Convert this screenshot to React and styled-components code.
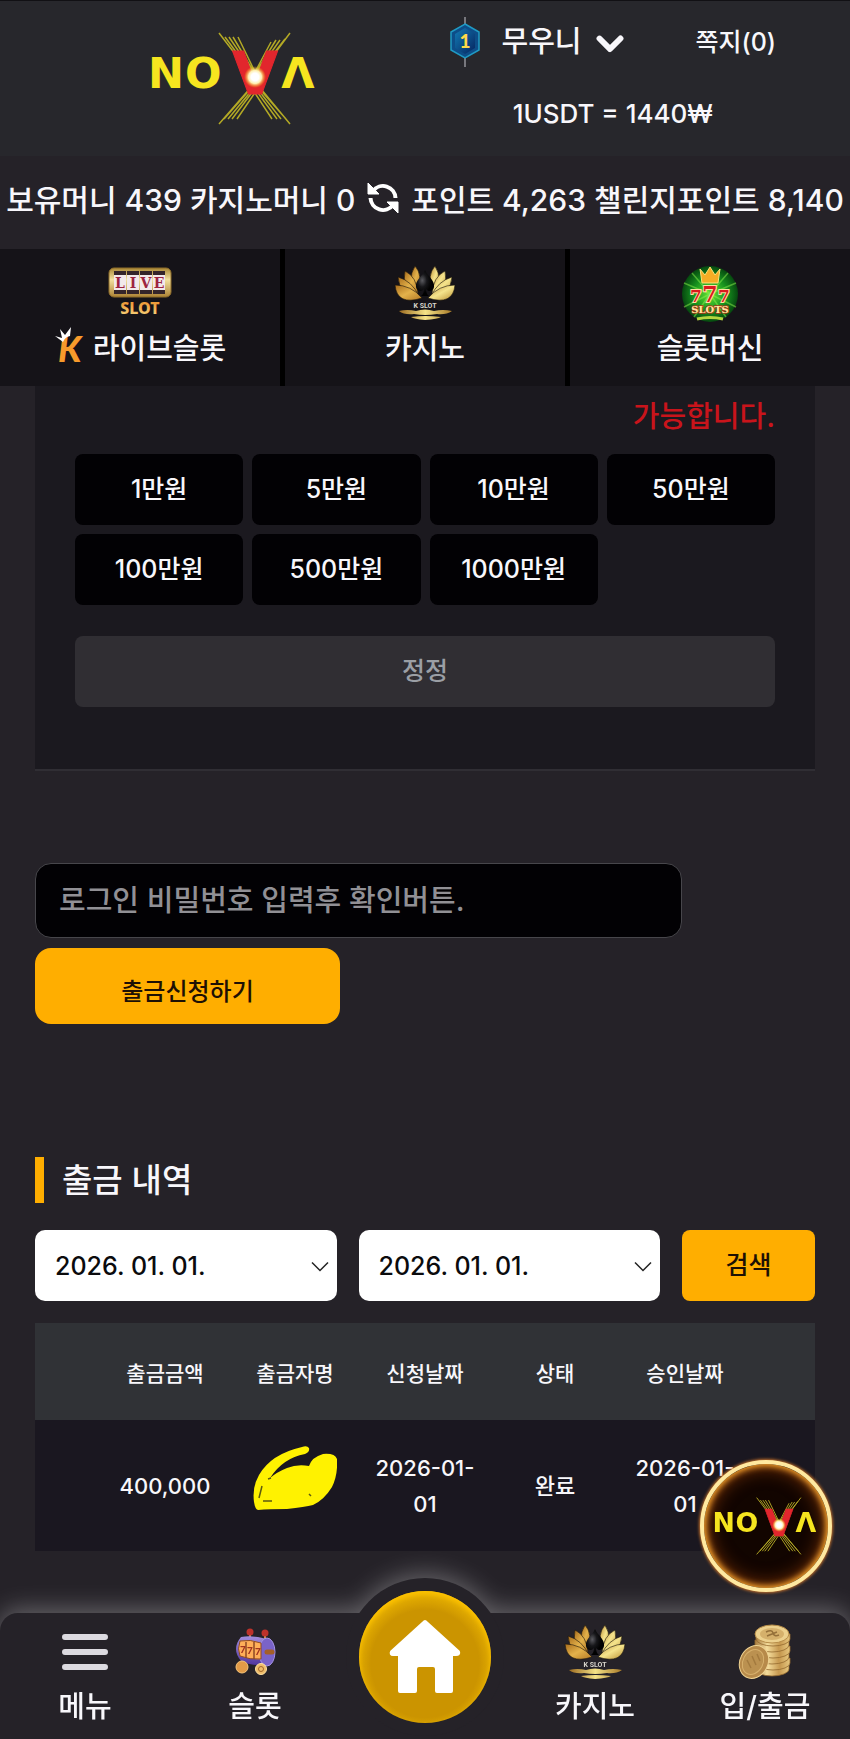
import React, { useState } from "react";
import styled, { createGlobalStyle } from "styled-components";
import { FaChevronDown } from "react-icons/fa6";

const palette = {
  page: "#252228",
  header: "#27272c",
  tab: "#151318",
  panel: "#1b191f",
  row: "#1a1720",
  tableHead: "#303236",
  disabled: "#302e33",
  line: "#302e34",
  amber: "#ffae00",
  text: "#f8f7fb",
  red: "#c9141b",
};

const amounts = ["1만원", "5만원", "10만원", "50만원", "100만원", "500만원", "1000만원"];
const columns = ["출금금액", "출금자명", "신청날짜", "상태", "승인날짜"];
const dates = ["2026. 01. 01.", "2025. 12. 31.", "2025. 12. 30."];

const App = () => {
  const [password, setPassword] = useState("");

  return (
    <>
      <GlobalStyle />
      <Gradients />
      <Header>
        <LogoLink href="#home" aria-label="NOVA">
          <NovaLogo width={170} />
        </LogoLink>
        <UserArea>
          <UserRow>
            <NameButton type="button">
              <LevelBadge />
              <span>무우니</span>
              <FaChevronDown size={28} stroke="currentColor" strokeWidth={44} />
            </NameButton>
            <NoteLink href="#notes">쪽지(0)</NoteLink>
          </UserRow>
          <Rate>1USDT = 1440₩</Rate>
        </UserArea>
      </Header>
      <Balance>
        <span>보유머니 439 카지노머니 0</span>
        <RefreshButton type="button" aria-label="새로고침">
          <RefreshIcon />
        </RefreshButton>
        <span>포인트 4,263 챌린지포인트 8,140</span>
      </Balance>
      <GameTabs>
        <GameTab href="#live">
          <LiveSlotIcon />
          <TabLabel>
            <KMark />
            라이브슬롯
          </TabLabel>
        </GameTab>
        <GameTab href="#casino">
          <LotusIcon />
          <TabLabel>카지노</TabLabel>
        </GameTab>
        <GameTab href="#slots">
          <SevensIcon />
          <TabLabel>슬롯머신</TabLabel>
        </GameTab>
      </GameTabs>

      <Main>
        <AmountPanel>
          <Warning>가능합니다.</Warning>
          <AmountGrid>
            {amounts.map((amount) => (
              <AmountButton type="button" key={amount}>
                {amount}
              </AmountButton>
            ))}
          </AmountGrid>
          <ResetButton type="button">정정</ResetButton>
        </AmountPanel>

        <WithdrawForm onSubmit={(e) => e.preventDefault()}>
          <PasswordInput
            type="password"
            aria-label="로그인 비밀번호"
            placeholder="로그인 비밀번호 입력후 확인버튼."
            value={password}
            onChange={(e) => setPassword(e.target.value)}
          />
          <SubmitButton type="submit">출금신청하기</SubmitButton>
        </WithdrawForm>

        <Title>출금 내역</Title>
        <SearchRow>
          <DateField label="시작일" />
          <DateField label="종료일" />
          <SearchButton type="button">검색</SearchButton>
        </SearchRow>

        <Table>
          <colgroup>
            <EdgeCol />
            {columns.map((name) => (
              <col key={name} />
            ))}
            <EdgeCol />
          </colgroup>
          <thead>
            <tr>
              <HeadCell as="td" />
              {columns.map((name) => (
                <HeadCell key={name} scope="col">
                  {name}
                </HeadCell>
              ))}
              <HeadCell as="td" />
            </tr>
          </thead>
          <tbody>
            <tr>
              <Cell />
              <Cell>400,000</Cell>
              <Cell>
                <Scribble />
              </Cell>
              <Cell>2026-01-01</Cell>
              <Cell>완료</Cell>
              <Cell>2026-01-01</Cell>
              <Cell />
            </tr>
          </tbody>
        </Table>
      </Main>

      <FloatingLink href="#nova" aria-label="NOVA">
        <NovaLogo width={106} />
      </FloatingLink>

      <BottomNav>
        <NavItem href="#menu">
          <IconSlot>
            <MenuIcon />
          </IconSlot>
          메뉴
        </NavItem>
        <NavItem href="#slot">
          <IconSlot>
            <SlotMachineIcon />
          </IconSlot>
          슬롯
        </NavItem>
        <HomeItem>
          <HomeLink href="#home" aria-label="홈">
            <HouseIcon />
          </HomeLink>
        </HomeItem>
        <NavItem href="#casino">
          <IconSlot>
            <LotusIcon />
          </IconSlot>
          카지노
        </NavItem>
        <NavItem href="#cash">
          <IconSlot>
            <CoinsIcon />
          </IconSlot>
          입/출금
        </NavItem>
      </BottomNav>
    </>
  );
};

export default App;

const DateField = ({ label }) => (
  <DateWrap>
    <DateSelect aria-label={label}>
      {dates.map((date) => (
        <option key={date}>{date}</option>
      ))}
    </DateSelect>
    <DateArrow viewBox="0 0 18 11" aria-hidden="true">
      <path d="M1 1.5 L9 9.5 L17 1.5" fill="none" stroke="#222" strokeWidth="1.5" />
    </DateArrow>
  </DateWrap>
);

const Gradients = () => (
  <HiddenSvg width="0" height="0" aria-hidden="true">
    <defs>
      <linearGradient id="gold" x1="0" y1="0" x2="1" y2="1">
        <stop offset="0" stopColor="#a96d1c" />
        <stop offset="0.5" stopColor="#e3b24b" />
        <stop offset="1" stopColor="#b57a25" />
      </linearGradient>
      <linearGradient id="paleGold" x1="0" y1="0" x2="1" y2="1">
        <stop offset="0" stopColor="#b98a33" />
        <stop offset="0.5" stopColor="#f5e48c" />
        <stop offset="1" stopColor="#b88d30" />
      </linearGradient>
      <linearGradient id="water" x1="0" y1="0" x2="1" y2="0">
        <stop offset="0" stopColor="#9c6b20" />
        <stop offset="0.5" stopColor="#f4e287" />
        <stop offset="1" stopColor="#a87a28" />
      </linearGradient>
      <linearGradient id="frame" x1="0" y1="0" x2="0" y2="1">
        <stop offset="0" stopColor="#a88633" />
        <stop offset="0.4" stopColor="#f3e2a0" />
        <stop offset="1" stopColor="#ad8334" />
      </linearGradient>
      <linearGradient id="slotText" x1="0" y1="0" x2="0" y2="1">
        <stop offset="0.3" stopColor="#ee9c3b" />
        <stop offset="1" stopColor="#f7e08b" />
      </linearGradient>
      <linearGradient id="badge" x1="0" y1="0" x2="1" y2="1">
        <stop offset="0" stopColor="#127bb5" />
        <stop offset="1" stopColor="#06245f" />
      </linearGradient>
      <linearGradient id="violet" x1="0" y1="0" x2="0" y2="1">
        <stop offset="0" stopColor="#a18ddd" />
        <stop offset="1" stopColor="#51379f" />
      </linearGradient>
      <linearGradient id="coinSide" x1="0" y1="0" x2="1" y2="0">
        <stop offset="0" stopColor="#a87c40" />
        <stop offset="0.35" stopColor="#f4dc9b" />
        <stop offset="0.7" stopColor="#c6984f" />
        <stop offset="1" stopColor="#e6c77f" />
      </linearGradient>
      <radialGradient id="green">
        <stop offset="0" stopColor="#66e635" />
        <stop offset="0.6" stopColor="#16911e" />
        <stop offset="1" stopColor="#06480f" />
      </radialGradient>
      <radialGradient id="core">
        <stop offset="0.35" stopColor="#ffffff" />
        <stop offset="0.6" stopColor="#fff0b2" />
        <stop offset="1" stopColor="#ffb000" stopOpacity="0" />
      </radialGradient>
      <radialGradient id="spade" cx="0.35" cy="0.4">
        <stop offset="0" stopColor="#5b5b60" />
        <stop offset="0.5" stopColor="#17171a" />
        <stop offset="1" stopColor="#010101" />
      </radialGradient>
    </defs>
  </HiddenSvg>
);

const NovaLogo = ({ width }) => (
  <svg width={width} viewBox="0 0 170 93" aria-hidden="true">
    <g stroke="#b3a925" strokeWidth="1.5">
      <path d="M70 92 L110 46 M75 87 L111 46 M79 87 L113 46 M83 87 L114 46 M88 87 L116 46" />
      <path d="M141 92 L103 46 M137 87 L101 46 M132 87 L100 46 M128 87 L98 46 M123 87 L96 46" />
      <path d="M70 1 L103 44 M76 5 L104 43 M80 5 L105 42 M84 5 L106 42 M89 5 L107 42" />
      <path d="M141 1 L109 44 M136 7 L108 43 M131 8 L107 42 M127 8 L106 42 M122 10 L105 42" />
    </g>
    <g fill="#f6e51f" fontFamily="DejaVu Sans" fontWeight="700" fontSize="43">
      <text x="-1" y="56">N</text>
      <text x="36" y="56">O</text>
      <text x="149" y="56" textAnchor="middle">Λ</text>
    </g>
    <text
      x="106"
      y="62"
      textAnchor="middle"
      fill="#e2262d"
      stroke="#e2262d"
      strokeWidth="1"
      fontFamily="DejaVu Sans"
      fontWeight="700"
      fontSize="59"
    >
      V
    </text>
    <circle cx="106" cy="45" r="11" fill="url(#core)" />
  </svg>
);

const LevelBadge = () => (
  <svg width="30" height="50" viewBox="0 0 30 50" aria-hidden="true">
    <path d="M15 0 V50" stroke="#77777d" strokeWidth="2" />
    <path d="M15 7 L29 15 V33 L15 41 L1 33 V15 Z" fill="#0d4d88" stroke="#1f9ac4" strokeWidth="1.5" />
    <path d="M15 11 L25 17 V31 L15 37 L5 31 V17 Z" fill="url(#badge)" />
    <text x="15" y="31" textAnchor="middle" fontFamily="Lato" fontWeight="900" fontSize="19" fill="#ffd94a">
      1
    </text>
  </svg>
);

const RefreshIcon = () => (
  <svg width="32" height="32" viewBox="0 0 32 32" fill="#fff" aria-hidden="true">
    <path d="M6 9 A12.5 12.5 0 0 1 28.5 16" fill="none" stroke="#fff" strokeWidth="4" />
    <path d="M26 23 A12.5 12.5 0 0 1 3.5 16" fill="none" stroke="#fff" strokeWidth="4" />
    <path d="M1 1 V12 H12 Z M31 31 V20 H20 Z" strokeLinejoin="round" stroke="#fff" />
  </svg>
);

const LiveSlotIcon = () => (
  <svg width="64" height="54" viewBox="0 0 64 54" aria-hidden="true">
    <rect x="1" y="3" width="62" height="29" rx="5" fill="url(#frame)" stroke="#8d6c2b" />
    {["L", "I", "V", "E"].map((letter, i) => (
      <g key={letter}>
        <rect x={6 + i * 13} y="6" width="12" height="23" fill="#34252a" />
        <rect x={6 + i * 13} y="10" width="12" height="15" fill="#f2e9ea" />
        <text
          x={12 + i * 13}
          y="23"
          textAnchor="middle"
          fontFamily="DejaVu Serif"
          fontWeight="700"
          fontSize="14"
          fill="#9d2440"
        >
          {letter}
        </text>
      </g>
    ))}
    <text
      x="32"
      y="49"
      textAnchor="middle"
      fontFamily="Noto Sans"
      fontWeight="800"
      fontSize="16"
      fill="url(#slotText)"
    >
      SLOT
    </text>
  </svg>
);

const KMark = () => (
  <svg width="36" height="46" viewBox="0 0 36 46" aria-hidden="true">
    <text x="4" y="36" fontFamily="Lato" fontWeight="900" fontStyle="italic" fontSize="36" fill="#f79a2b">
      K
    </text>
    <path d="M1 10 L8 12 L6 3 L11 9 L17 1 L16 10 Q11 11 9 16 Z" fill="#fff" />
  </svg>
);

const LotusIcon = () => (
  <svg width="62" height="56" viewBox="0 0 62 56" aria-hidden="true">
    <g fill="url(#gold)" stroke="#17120a" strokeWidth="0.6">
      <path d="M21 1 Q29 10 24 25 Q12 16 21 1 Z" />
      <path d="M11 6 Q23 12 24 29 Q7 22 11 6 Z" />
      <path d="M4 12 Q18 16 25 31 Q5 29 4 12 Z" />
      <path d="M1 20 Q17 20 28 33 Q3 41 1 20 Z" />
    </g>
    <g fill="url(#paleGold)" stroke="#17120a" strokeWidth="0.6">
      <path d="M41 1 Q33 10 38 25 Q50 16 41 1 Z" />
      <path d="M51 6 Q39 12 38 29 Q55 22 51 6 Z" />
      <path d="M58 12 Q44 16 37 31 Q57 29 58 12 Z" />
      <path d="M61 20 Q45 20 34 33 Q59 41 61 20 Z" />
    </g>
    <path
      d="M31 5 C34 12 41 15 40 22 C39 27 34 27 32 24 Q32 29 35 31 H27 Q30 29 30 24 C28 27 23 27 22 22 C21 15 28 12 31 5 Z"
      fill="url(#spade)"
    />
    <text x="31" y="43" textAnchor="middle" fontFamily="Roboto" fontWeight="700" fontSize="7" fill="#d8d5cc">
      K SLOT
    </text>
    <path
      d="M5 46 Q13 44 22 46 Q31 43 40 46 Q49 44 58 46 Q52 50 43 49 Q31 51 20 49 Q10 50 5 46 Z M17 52 Q31 50 47 52 Q44 54 31 55 Q20 54 17 52 Z"
      fill="url(#water)"
    />
  </svg>
);

const SevensIcon = () => (
  <svg width="56" height="58" viewBox="0 0 56 58" aria-hidden="true">
    <circle cx="28" cy="29" r="28" fill="url(#green)" />
    <path
      d="M28 29 L2 18 M28 29 L10 8 M28 29 L46 8 M28 29 L54 18 M28 29 L2 42 M28 29 L54 42 M28 29 L12 52 M28 29 L44 52"
      stroke="#8cf04c"
      strokeOpacity="0.5"
      strokeWidth="1.5"
    />
    <path d="M18 4 L23 10 L28 2 L33 10 L38 4 L36 18 H20 Z" fill="#f7ad25" stroke="#fce27a" />
    <g
      fontFamily="DejaVu Serif"
      fontWeight="700"
      textAnchor="middle"
      fill="#d91b1e"
      stroke="#ffe0a2"
      strokeWidth="2"
      paintOrder="stroke"
    >
      <text x="14" y="37" fontSize="17">7</text>
      <text x="42" y="37" fontSize="17">7</text>
      <text x="28" y="37" fontSize="22">7</text>
    </g>
    <text
      x="28"
      y="48"
      textAnchor="middle"
      fontFamily="DejaVu Serif"
      fontWeight="700"
      fontSize="10"
      fill="#ffe9a0"
      stroke="#a4381a"
      strokeWidth="1.5"
      paintOrder="stroke"
    >
      SLOTS
    </text>
    <path d="M15 54 Q28 51 41 54" stroke="#b4d63f" strokeWidth="3" fill="none" />
  </svg>
);

const SlotMachineIcon = () => (
  <svg width="44" height="48" viewBox="0 0 44 48" aria-hidden="true">
    <path d="M17 4 V13 M32 5 V14" stroke="#c98b54" strokeWidth="2" />
    <circle cx="17" cy="4" r="3.5" fill="#bd322b" />
    <circle cx="32" cy="5" r="3.5" fill="#bd322b" />
    <path d="M8 9 Q20 7 34 11 V36 Q20 39 8 33 Q-2 21 8 9 Z" fill="url(#violet)" />
    <ellipse cx="34" cy="24" rx="8" ry="14" fill="#7a63c8" stroke="#a493e3" />
    <path d="M7 13 Q17 11 28 15 V31 Q17 32 7 28 Q4 21 7 13 Z" fill="#ffae58" stroke="#8f4a24" />
    <path d="M13 14 V30 M21 14 V31" stroke="#8f4a24" strokeWidth="1.5" />
    <g fontFamily="Lato" fontWeight="900" fontSize="10" fill="#a23420" textAnchor="middle">
      <text x="10" y="25">7</text>
      <text x="17" y="26">7</text>
      <text x="25" y="27">7</text>
    </g>
    <path d="M34 24 H39" stroke="#a55f28" strokeWidth="5" strokeLinecap="round" />
    <circle cx="9" cy="39" r="6" fill="#e29b48" stroke="#f8c578" />
    <circle cx="28" cy="41" r="5.5" fill="#efbd6b" stroke="#ffe1a2" />
    <circle cx="28" cy="41" r="2.5" fill="none" stroke="#a3682a" />
  </svg>
);

const CoinsIcon = () => (
  <svg width="54" height="56" viewBox="0 0 54 56" aria-hidden="true">
    {[45, 39, 33, 27, 21, 15].map((y, i) => (
      <path
        key={y}
        d={`M${17 + (i % 2)} ${y - 5} V${y} A17 7 0 0 0 ${51 + (i % 2)} ${y} V${y - 5} Z`}
        fill="url(#coinSide)"
        stroke="#94692f"
        strokeWidth="0.8"
      />
    ))}
    <ellipse cx="34" cy="10" rx="17" ry="9" fill="#ecd08d" stroke="#b78d49" />
    <ellipse cx="34" cy="10" rx="12" ry="6" fill="#d5b06b" />
    <path d="M28 8 Q34 5 35 9 T41 11 M29 12 L39 8" stroke="#957039" strokeWidth="1.5" fill="none" />
    <ellipse cx="16" cy="38" rx="14" ry="17" transform="rotate(28 16 38)" fill="#b78a4a" stroke="#efd393" />
    <ellipse cx="15" cy="38" rx="10" ry="13" transform="rotate(28 15 38)" fill="#bb9150" stroke="#d7b06c" />
    <path d="M9 36 L13 44 M14 32 L18 41 M19 30 L22 37" stroke="#a37a3e" strokeWidth="1.5" />
  </svg>
);

const MenuIcon = () => (
  <svg width="46" height="38" viewBox="0 0 46 38" aria-hidden="true">
    <path d="M3 4 H43 M3 19 H43 M3 34 H43" stroke="#dcdae0" strokeWidth="6" strokeLinecap="round" />
  </svg>
);

const HouseIcon = () => (
  <svg width="74" height="76" viewBox="0 0 74 76" aria-hidden="true">
    <path
      d="M37 3 L70 33 Q71 35 68 35 H63 V72 H49 V50 Q49 46 45 46 H31 Q27 46 27 50 V72 H12 V35 H5 Q3 35 4 33 Z"
      fill="#fff"
      stroke="#fff"
      strokeWidth="4"
      strokeLinejoin="round"
    />
  </svg>
);

const Scribble = () => (
  <svg width="84" height="66" viewBox="0 0 84 66" role="img" aria-label="가려진 이름">
    <path
      d="M1 57 Q-1 42 6 30 Q18 9 49 2 Q54 0 56 3 Q57 7 52 9 Q30 13 17 33 Q24 27 34 23 Q44 19 56 21 Q59 12 70 9 Q82 8 84 14 Q85 30 79 42 Q71 55 60 60 Q52 62 34 64 Q16 64 5 65 Q2 64 1 57 Z"
      fill="#fff200"
    />
    <path d="M6 53 L9 41 M15 34 L18 33 M10 56 H19 M56 49 L58 51" stroke="#5d5a10" strokeWidth="1.5" />
  </svg>
);

const GlobalStyle = createGlobalStyle`
  * {
    box-sizing: border-box;
  }

  body {
    margin: 0;
    background-color: ${palette.page};
    color: ${palette.text};
    font-family: Inter, "Noto Sans CJK KR", sans-serif;
    font-weight: 500;
  }

  a {
    color: inherit;
    text-decoration: none;
  }

  button,
  input,
  select {
    font: inherit;
    color: inherit;
    border: none;
    padding: 0;
    background: none;
  }

  button {
    cursor: pointer;
  }

  svg {
    display: block;
    flex-shrink: 0;
  }
`;

const HiddenSvg = styled.svg`
  position: absolute;
`;

const Header = styled.header`
  display: grid;
  grid-template-columns: 11fr 9fr;
  height: 156px;
  background-color: ${palette.header};
  border-top: 1px solid #111014;
`;

const LogoLink = styled.a`
  justify-self: center;
  padding-top: 31px;
`;

const UserArea = styled.div`
  display: flex;
  flex-direction: column;
  gap: 31px;
  padding: 16px 74px 0 0;
  margin-left: -18px;
`;

const UserRow = styled.div`
  display: flex;
  justify-content: space-between;
  align-items: center;
`;

const NameButton = styled.button`
  display: flex;
  align-items: center;
  font-size: 29px;
  line-height: 50px;

  span {
    margin: 0 14px 0 22px;
  }
`;

const NoteLink = styled.a`
  padding-bottom: 4px;
  font-size: 25px;
`;

const Rate = styled.div`
  text-align: center;
  font-size: 26px;
  line-height: 32px;
`;

const Balance = styled.div`
  display: flex;
  justify-content: center;
  align-items: center;
  gap: 12px;
  height: 93px;
  padding-bottom: 10px;
  font-size: 30px;
  white-space: nowrap;
`;

const RefreshButton = styled.button`
  flex-shrink: 0;
`;

const GameTabs = styled.nav`
  display: grid;
  grid-template-columns: repeat(3, 1fr);
  gap: 5px;
  background-color: #000;
`;

const GameTab = styled.a`
  display: flex;
  flex-direction: column;
  align-items: center;
  justify-content: space-between;
  height: 137px;
  padding: 16px 0;
  background-color: ${palette.tab};
`;

const TabLabel = styled.span`
  display: flex;
  align-items: center;
  gap: 3px;
  height: 42px;
  font-size: 29px;
  line-height: 42px;
`;

const Main = styled.main`
  padding: 0 35px 150px;
`;

const AmountPanel = styled.section`
  padding: 10px 40px 62px;
  background-color: ${palette.panel};
  border-bottom: 2px solid ${palette.line};
`;

const Warning = styled.p`
  margin: 0 0 16px;
  text-align: right;
  font-size: 29px;
  line-height: 42px;
  color: ${palette.red};
`;

const AmountGrid = styled.div`
  display: grid;
  grid-template-columns: repeat(4, 1fr);
  gap: 9px;
  margin-bottom: 31px;
`;

const AmountButton = styled.button`
  height: 71px;
  padding-bottom: 5px;
  border-radius: 8px;
  background-color: #020104;
  font-size: 25px;
`;

const ResetButton = styled.button`
  width: 100%;
  height: 71px;
  padding-bottom: 6px;
  border-radius: 8px;
  background-color: ${palette.disabled};
  color: #9b9fa5;
  font-size: 25px;
`;

const WithdrawForm = styled.form`
  display: flex;
  flex-direction: column;
  align-items: flex-start;
  gap: 10px;
  margin: 92px 0 133px;
`;

const PasswordInput = styled.input`
  width: 83%;
  height: 75px;
  padding: 0 23px;
  border: 1px solid #47464b;
  border-radius: 16px;
  background-color: #020104;
  font-size: 29px;

  &::placeholder {
    color: #919095;
    opacity: 1;
  }
`;

const SubmitButton = styled.button`
  width: 305px;
  height: 76px;
  padding-top: 6px;
  border-radius: 16px;
  background-color: ${palette.amber};
  color: #1d1004;
  font-size: 24px;
`;

const Title = styled.h2`
  margin: 0 0 27px;
  padding-left: 18px;
  border-left: 9px solid ${palette.amber};
  font-size: 33px;
  font-weight: 500;
  line-height: 46px;
`;

const SearchRow = styled.div`
  display: flex;
  gap: 22px;
  margin-bottom: 22px;
`;

const DateWrap = styled.div`
  position: relative;
  flex: 1;
`;

const DateSelect = styled.select`
  appearance: none;
  width: 100%;
  height: 71px;
  padding-left: 20px;
  border-radius: 10px;
  background-color: #fff;
  color: #0b0b0d;
  font-size: 25px;
`;

const DateArrow = styled.svg`
  position: absolute;
  top: 31px;
  right: 8px;
  width: 18px;
  pointer-events: none;
`;

const SearchButton = styled.button`
  width: 133px;
  height: 71px;
  padding-bottom: 5px;
  border-radius: 8px;
  background-color: ${palette.amber};
  color: #1d1004;
  font-size: 25px;
`;

const Table = styled.table`
  width: 100%;
  table-layout: fixed;
  border-collapse: collapse;
`;

const EdgeCol = styled.col`
  width: 65px;
`;

const HeadCell = styled.th`
  height: 97px;
  padding: 0;
  background-color: ${palette.tableHead};
  font-size: 21px;
  font-weight: 500;
`;

const Cell = styled.td`
  height: 131px;
  padding: 0 8px;
  background-color: ${palette.row};
  text-align: center;
  font-size: 22px;
  line-height: 36px;

  svg {
    margin: -16px auto 0;
  }
`;

const FloatingLink = styled.a`
  position: fixed;
  right: 18px;
  bottom: 147px;
  z-index: 2;
  display: flex;
  align-items: center;
  justify-content: center;
  width: 132px;
  height: 132px;
  border: 4px solid #ffe9a0;
  border-radius: 50%;
  background-color: #120500;
  box-shadow:
    0 0 3px 1px #c4712b,
    inset 0 0 6px 2px #ffab2e,
    inset 0 0 18px 4px #7a3208;
`;

const BottomNav = styled.nav`
  position: fixed;
  left: 0;
  right: 0;
  bottom: 0;
  display: grid;
  grid-template-columns: repeat(5, 1fr);
  grid-template-rows: 126px;
  border-radius: 18px 18px 0 0;
  background-color: ${palette.page};
  filter: drop-shadow(0 -4px 12px rgba(255, 255, 255, 0.3));
`;

const NavItem = styled.a`
  display: flex;
  flex-direction: column;
  align-items: center;
  padding-top: 9px;
  font-size: 29px;
  line-height: 42px;
`;

const IconSlot = styled.span`
  display: flex;
  align-items: center;
  height: 59px;
  margin-bottom: 5px;
`;

const HomeItem = styled.div`
  justify-self: center;
  align-self: end;
  margin-bottom: 3px;
  padding: 13px;
  border-radius: 50%;
  background-color: ${palette.page};
`;

const HomeLink = styled.a`
  display: flex;
  align-items: center;
  justify-content: center;
  width: 132px;
  height: 132px;
  border-radius: 50%;
  background: radial-gradient(circle at 50% 55%, #cb9400 55%, #e5ae00 70%);
  box-shadow: inset 0 3px 5px #ffc400;
`;
